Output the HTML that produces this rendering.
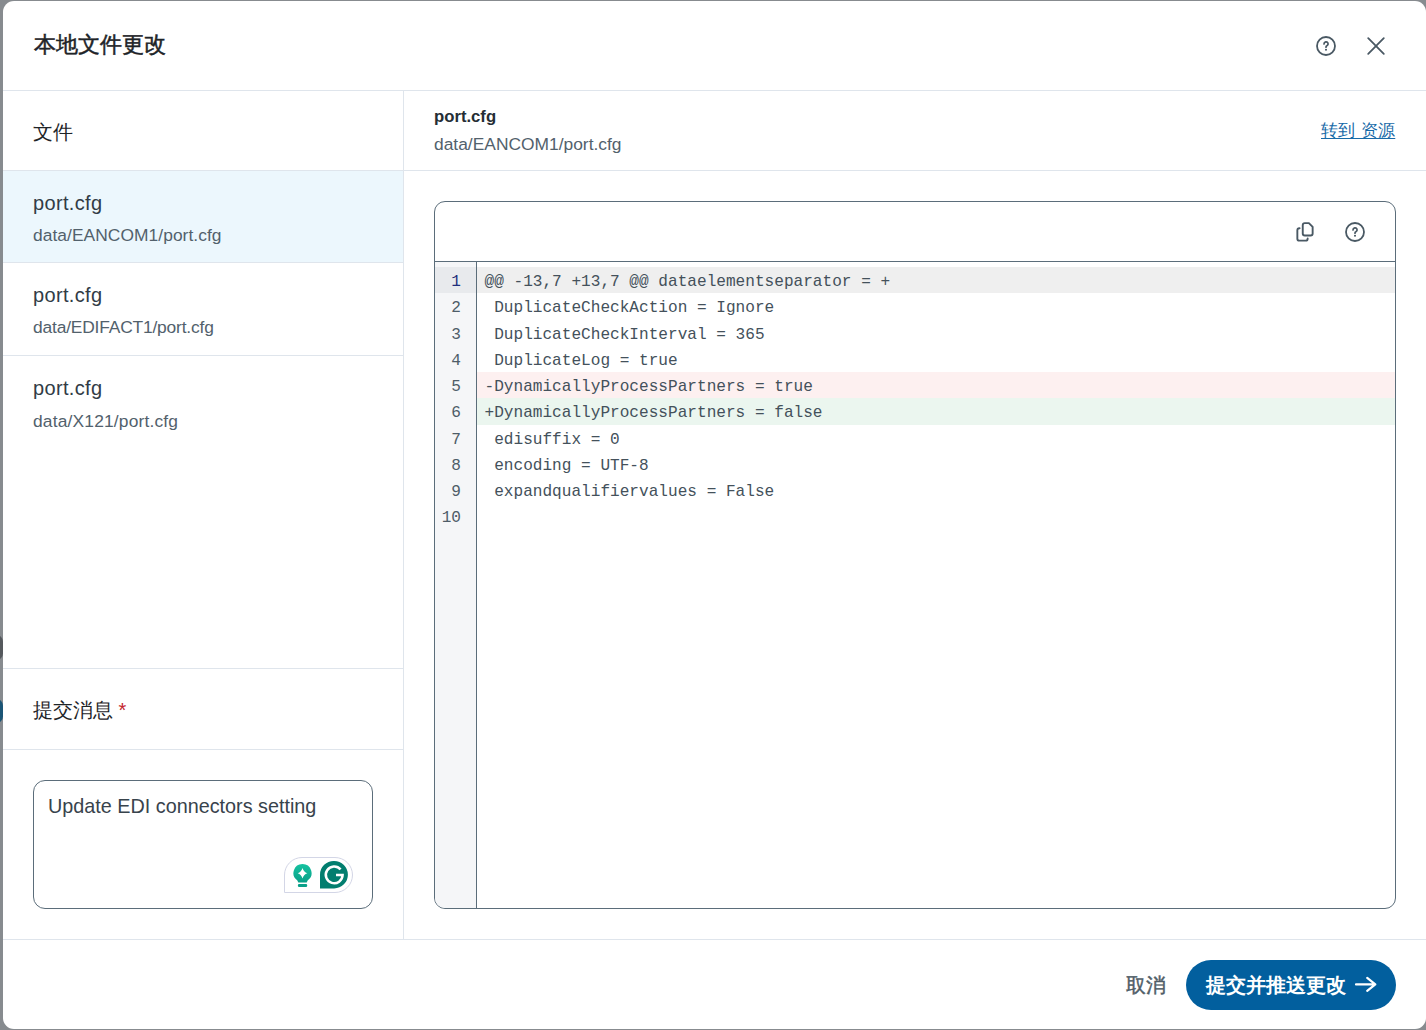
<!DOCTYPE html>
<html><head><meta charset="utf-8">
<style>
*{box-sizing:border-box;margin:0;padding:0}
html,body{width:1426px;height:1030px;overflow:hidden;background:#878b8f;font-family:"Liberation Sans",sans-serif;color:#1f2a33}
.blob{position:absolute;left:-10px;width:13px;border-radius:8px}
.modal{position:absolute;left:3px;top:1px;width:1423px;height:1028px;background:#fff;border-radius:11px;overflow:hidden}
.a{position:absolute;white-space:pre;line-height:1}
.hl{position:absolute;background:#dfe5ec}
.title{left:31px;top:33px;font-size:22px;color:#1e2428;-webkit-text-stroke:0.5px #1e2428}
.ic{position:absolute}
.left-h{left:30px;font-size:20px;color:#1e2428}
.fn{left:30px;font-size:20px;color:#313c46;letter-spacing:0.35px}
.fp{left:30px;font-size:17.4px;color:#52616c}
.code{position:absolute;left:431px;top:200px;width:962px;height:708px;border:1.3px solid #5b6d7a;border-radius:11px;overflow:hidden}
.tb{position:absolute;left:0;top:0;width:100%;height:60px;border-bottom:1.3px solid #5b6d7a}
.gut{position:absolute;left:0;top:60px;width:42px;bottom:0;background:#f5f6f8;border-right:1.3px solid #5b6d7a}
.ln{position:absolute;left:0;width:42px;height:26.25px;text-align:right;padding-right:16px;padding-top:2.2px;font-family:"Liberation Mono",monospace;font-size:16.1px;line-height:26.25px;color:#4e5d68}
.cl{position:absolute;left:42px;right:0;height:26.25px;padding-left:7.5px;padding-top:2px;font-family:"Liberation Mono",monospace;font-size:16.1px;line-height:26.25px;color:#44515b;white-space:pre}
</style></head><body>
<div class="blob" style="top:635px;height:24.5px;background:#55595d"></div>
<div class="blob" style="top:699px;height:23.5px;background:#1b5576"></div>
<div class="modal">
  <!-- header -->
  <div class="a title">本地文件更改</div>
  <svg class="ic" style="left:1312px;top:34px" width="22" height="22" viewBox="0 0 22 22"><circle cx="11" cy="11" r="9" fill="none" stroke="#4a5964" stroke-width="1.8"/><path d="M9 8.9a2.05 2.05 0 1 1 2.9 1.85c-.55.28-.9.6-.9 1.15v.35" fill="none" stroke="#4a5964" stroke-width="1.7" stroke-linecap="round"/><circle cx="11" cy="14.7" r="1.05" fill="#4a5964"/></svg>
  <svg class="ic" style="left:1363px;top:35px" width="20" height="20" viewBox="0 0 20 20"><path d="M2.2 2.2L17.8 17.8M17.8 2.2L2.2 17.8" stroke="#4a5964" stroke-width="1.8" stroke-linecap="round"/></svg>
  <div class="hl" style="left:0;top:89px;width:1423px;height:1px"></div>
  <!-- left panel -->
  <div class="hl" style="left:400px;top:90px;width:1px;height:848px"></div>
  <div class="a left-h" style="top:120.5px">文件</div>
  <div class="hl" style="left:0;top:169px;width:400px;height:1px"></div>
  <div style="position:absolute;left:0;top:170px;width:400px;height:91px;background:#ecf7fd"></div>
  <div class="a fn" style="top:192px">port.cfg</div>
  <div class="a fp" style="top:226px;letter-spacing:0.05px">data/EANCOM1/port.cfg</div>
  <div class="hl" style="left:0;top:261px;width:400px;height:1px"></div>
  <div class="a fn" style="top:284px">port.cfg</div>
  <div class="a fp" style="top:318px;letter-spacing:-0.18px">data/EDIFACT1/port.cfg</div>
  <div class="hl" style="left:0;top:354px;width:400px;height:1px"></div>
  <div class="a fn" style="top:377px">port.cfg</div>
  <div class="a fp" style="top:412px;letter-spacing:0.17px">data/X121/port.cfg</div>
  <div class="hl" style="left:0;top:667px;width:400px;height:1px"></div>
  <div class="a left-h" style="top:699px">提交消息 <span style="color:#c4262e">*</span></div>
  <div class="hl" style="left:0;top:748px;width:400px;height:1px"></div>
  <div style="position:absolute;left:30px;top:779px;width:340px;height:129px;border:1.3px solid #5b6d7a;border-radius:12px"></div>
  <div class="a" style="left:45px;top:796px;font-size:19.8px;color:#38434c">Update EDI connectors setting</div>
  <!-- grammarly -->
  <div style="position:absolute;left:281px;top:856px;width:69px;height:36px;border:1px solid #d3d6e6;border-radius:18px 18px 18px 0;background:#fff"></div>
  <svg class="ic" style="left:289px;top:861px" width="22" height="27" viewBox="0 0 22 27"><defs><linearGradient id="bg" x1="0" y1="0" x2="0" y2="1"><stop offset="0" stop-color="#16c2a0"/><stop offset="1" stop-color="#08a088"/></linearGradient></defs><path d="M10.5 2A9 9 0 0 0 5.2 18.3L6.3 20.6H14.7L15.8 18.3A9 9 0 0 0 10.5 2z" fill="url(#bg)"/><rect x="5.9" y="22" width="9.3" height="3" rx="1.2" fill="#09a089"/><path d="M10.5 6Q11.6 9.9 15.3 11.2Q11.6 12.5 10.5 16.4Q9.4 12.5 5.7 11.2Q9.4 9.9 10.5 6z" fill="#fff"/></svg>
  <svg class="ic" style="left:316px;top:859px" width="30" height="30" viewBox="0 0 30 30"><path d="M15.15 0.9A13.75 13.75 0 1 1 15.15 28.4H1V14.65A13.75 13.75 0 0 1 15.15 0.9z" fill="#027e6f"/><path d="M21.6 9.4A8.4 8.4 0 1 0 23.6 15H17" fill="none" stroke="#fff" stroke-width="2.5"/></svg>
  <!-- right header -->
  <div class="a" style="left:431px;top:108px;font-size:16.7px;font-weight:bold;color:#252e35">port.cfg</div>
  <div class="a" style="left:431px;top:134.5px;font-size:17.4px;color:#52616c">data/EANCOM1/port.cfg</div>
  <div class="a" style="left:1318px;top:121px;font-size:17.2px;letter-spacing:0.3px;color:#176aa8;text-decoration:underline;text-underline-offset:1.8px">转到 资源</div>
  <div class="hl" style="left:401px;top:169px;width:1022px;height:1px"></div>
  <!-- code box -->
  <div class="code">
    <div class="tb"></div>
    <div class="gut"></div>
    <div style="position:absolute;left:0;top:65px;width:40.7px;height:26.25px;background:#e8eaed"></div>
    <div class="cl" style="top:65px;background:#efefef">@@ -13,7 +13,7 @@ dataelementseparator = +</div>
    <div class="cl" style="top:91.25px"> DuplicateCheckAction = Ignore</div>
    <div class="cl" style="top:117.5px"> DuplicateCheckInterval = 365</div>
    <div class="cl" style="top:143.75px"> DuplicateLog = true</div>
    <div class="cl" style="top:170px;background:#fdf0f0">-DynamicallyProcessPartners = true</div>
    <div class="cl" style="top:196.25px;background:#ebf6ef">+DynamicallyProcessPartners = false</div>
    <div class="cl" style="top:222.5px"> edisuffix = 0</div>
    <div class="cl" style="top:248.75px"> encoding = UTF-8</div>
    <div class="cl" style="top:275px"> expandqualifiervalues = False</div>
    <div class="ln" style="top:65px;color:#1f2f7c">1</div>
    <div class="ln" style="top:91.25px">2</div>
    <div class="ln" style="top:117.5px">3</div>
    <div class="ln" style="top:143.75px">4</div>
    <div class="ln" style="top:170px">5</div>
    <div class="ln" style="top:196.25px">6</div>
    <div class="ln" style="top:222.5px">7</div>
    <div class="ln" style="top:248.75px">8</div>
    <div class="ln" style="top:275px">9</div>
    <div class="ln" style="top:301.25px">10</div>
    <svg class="ic" style="left:859px;top:18.2px" width="22" height="24" viewBox="0 0 22 24"><path d="M5.6 8.25H5.35a2 2 0 0 0-2 2V18.65a2 2 0 0 0 2 2H11.65a2 2 0 0 0 2-2V18.4" fill="none" stroke="#4a5964" stroke-width="1.9" stroke-linecap="round"/><path d="M10.75 3.15H14.9L18.65 6.9V13.55a2 2 0 0 1-2 2H10.75a2 2 0 0 1-2-2V5.15a2 2 0 0 1 2-2z" fill="none" stroke="#4a5964" stroke-width="1.9" stroke-linejoin="round"/></svg>
    <svg class="ic" style="left:909px;top:19px" width="22" height="22" viewBox="0 0 22 22"><circle cx="11" cy="11" r="9" fill="none" stroke="#4a5964" stroke-width="1.8"/><path d="M9 8.9a2.05 2.05 0 1 1 2.9 1.85c-.55.28-.9.6-.9 1.15v.35" fill="none" stroke="#4a5964" stroke-width="1.7" stroke-linecap="round"/><circle cx="11" cy="14.7" r="1.05" fill="#4a5964"/></svg>
  </div>
  <!-- footer -->
  <div class="hl" style="left:0;top:938px;width:1423px;height:1px"></div>
  <div class="a" style="left:1123px;top:973.5px;font-size:20px;color:#4f5d67;-webkit-text-stroke:0.45px #4f5d67">取消</div>
  <div style="position:absolute;left:1183px;top:959px;width:210px;height:50px;border-radius:25px;background:#025f9e"></div>
  <div class="a" style="left:1203px;top:973.5px;font-size:20px;color:#fff;font-weight:bold">提交并推送更改</div>
  <svg class="ic" style="left:1350px;top:974px" width="28" height="22" viewBox="0 0 28 22"><path d="M3 9.4H22.3M14.2 2.9L22.3 9.4L14.2 15.9" fill="none" stroke="#fff" stroke-width="2.2" stroke-linecap="round" stroke-linejoin="round"/></svg>
</div>
</body></html>
